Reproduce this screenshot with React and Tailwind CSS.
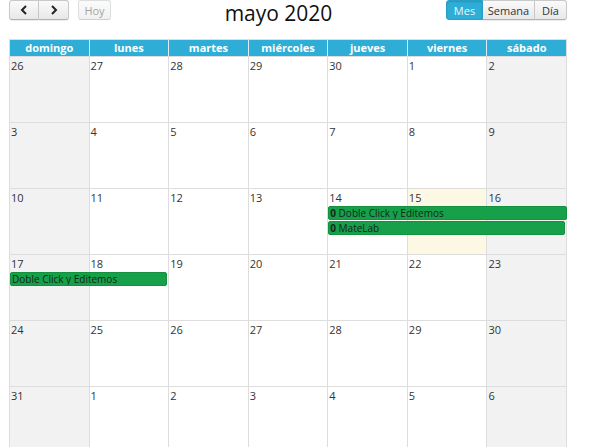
import React from "react";

const dayNames = ["domingo", "lunes", "martes", "miércoles", "jueves", "viernes", "sábado"];

const weeks = [
  [26, 27, 28, 29, 30, 1, 2],
  [3, 4, 5, 6, 7, 8, 9],
  [10, 11, 12, 13, 14, 15, 16],
  [17, 18, 19, 20, 21, 22, 23],
  [24, 25, 26, 27, 28, 29, 30],
  [31, 1, 2, 3, 4, 5, 6],
];

// events per week row
const events = {
  2: [
    { col: "col-start-5 col-span-3", title: "Doble Click y Editemos", count: "0", extra: "mr-[-1px]" },
    { col: "col-start-5 col-span-3", title: "MateLab", count: "0", extra: "mr-[1px]" },
  ],
  3: [{ col: "col-start-1 col-span-2", title: "Doble Click y Editemos", extra: "mr-[1px]" }],
};

function Btn({ children, className = "" }) {
  return (
    <button
      className={`h-[20px] text-[11px] leading-none border border-[#c9c9c9] border-b-[#b0b0b0] bg-gradient-to-b from-[#fafafa] to-[#e8e8e8] text-[#333] shadow-[0_1px_1px_rgba(0,0,0,0.08)] flex items-center justify-center ${className}`}
    >
      {children}
    </button>
  );
}

function Chevron({ dir }) {
  return (
    <svg width="8" height="10" viewBox="0 0 8 10" fill="none" stroke="#222" strokeWidth="2">
      {dir === "left" ? <path d="M6 1 L2 5 L6 9" /> : <path d="M2 1 L6 5 L2 9" />}
    </svg>
  );
}

export default function App() {
  return (
    <div className="w-[589px] h-[447px] overflow-hidden bg-white pl-[9px]" style={{ fontFamily: '"Open Sans", "Noto Sans", sans-serif' }}>
      {/* Toolbar */}
      <div className="flex items-start w-[558px] h-[39px]">
        <div className="flex">
          <Btn className="w-[30px] rounded-l-[3px]">
            <Chevron dir="left" />
          </Btn>
          <Btn className="w-[30px] border-l-0 rounded-r-[3px]">
            <Chevron dir="right" />
          </Btn>
          <Btn className="ml-[9px] w-[33px] rounded-[3px] opacity-60 text-[#666] shadow-none">Hoy</Btn>
        </div>
        <div className="flex-1 text-center text-[21px] leading-none pt-[3px] text-[#111]">mayo 2020</div>
        <div className="flex">
          <button className="h-[20px] w-[37px] text-[11px] leading-none rounded-l-[3px] bg-[#2eaed6] text-[#eaf7fc] border border-[#2a9ec4] shadow-[inset_0_1px_2px_rgba(0,0,0,0.15)]">
            Mes
          </button>
          <Btn className="w-[52px] border-l-0">Semana</Btn>
          <Btn className="w-[32px] border-l-0 rounded-r-[3px]">Día</Btn>
        </div>
      </div>

      {/* Calendar */}
      <div className="w-[558px] border-r border-[#ddd]">
        <div className="grid grid-cols-7 h-[17px] bg-[#2eaed6] border-t border-[#ddd]">
          {dayNames.map((d) => (
            <div key={d} className="border-l border-[#d9eef6] first:border-[#ddd] text-center text-white font-bold text-[11px] leading-[16px]">
              {d}
            </div>
          ))}
        </div>

        {weeks.map((week, wi) => (
          <div key={wi} className="relative h-[66px] border-t border-[#ddd] first:border-t-0">
            <div className="absolute inset-0 grid grid-cols-7">
              {week.map((n, di) => (
                <div
                  key={di}
                  className={`border-l border-[#ddd] ${
                    di === 0 || di === 6 ? "bg-[#f2f2f2]" : wi === 2 && di === 5 ? "bg-[#fcf8e3]" : "bg-white"
                  }`}
                />
              ))}
            </div>
            <div className="relative grid grid-cols-7 gap-y-[1px]">
              {week.map((n, di) => (
                <div key={di} className="pl-[2px] pt-[1px] text-[11px] leading-[15px] text-[#333]">
                  {n}
                </div>
              ))}
              {(events[wi] || []).map((ev, ei) => (
                <div
                  key={ei}
                  className={`${ev.col} ${ev.extra} ml-[1px] h-[14px] rounded-[2px] bg-[#16a04a] border border-[#13913f] px-[1px] text-[10px] leading-[12px] text-[#14261a] whitespace-nowrap overflow-hidden`}
                >
                  {ev.count && <b className="font-bold">{ev.count} </b>}
                  {ev.title}
                </div>
              ))}
            </div>
          </div>
        ))}
      </div>
    </div>
  );
}
